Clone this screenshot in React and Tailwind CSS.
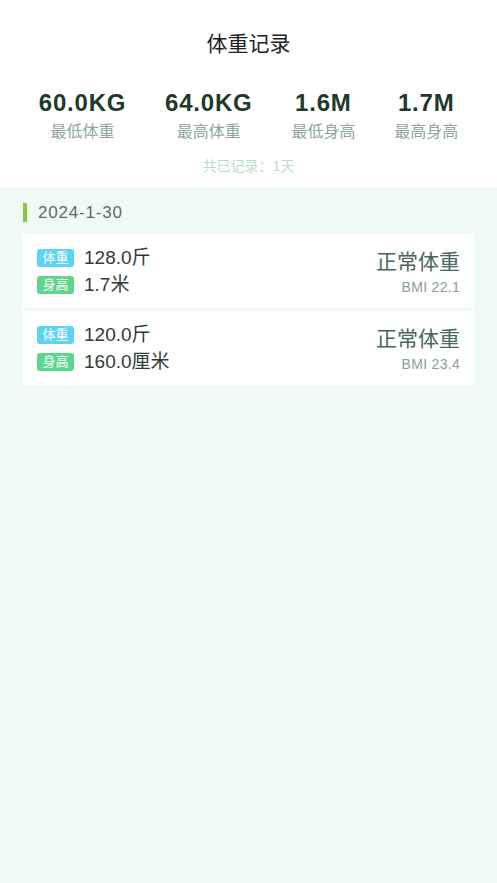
import React from "react";

const F = { fontFamily: '"Liberation Sans", "Noto Sans CJK SC", sans-serif' };

function Stat({ value, label }) {
  return (
    <div className="flex flex-col items-center">
      <div className="text-[24px] leading-[30px] font-bold tracking-[0.8px] text-[#1e3a2b]">{value}</div>
      <div className="text-[16px] leading-[22px] mt-[3px] text-[#8ea69c]">{label}</div>
    </div>
  );
}

function Badge({ text, color }) {
  return (
    <div className={`w-[37px] h-[18px] rounded-[3px] ${color} text-white text-[13px] leading-[18px] text-center`}>
      {text}
    </div>
  );
}

function Card({ w, h, bmi }) {
  return (
    <div className="bg-white mx-[23px] h-[74px] px-[14px] flex items-center justify-between">
      <div className="flex flex-col gap-[9px]">
        <div className="flex items-center gap-[10px]">
          <Badge text="体重" color="bg-[#5dd4f4]" />
          <span className="text-[19px] leading-[18px] text-[#2e3c37]">{w}</span>
        </div>
        <div className="flex items-center gap-[10px]">
          <Badge text="身高" color="bg-[#5fd68e]" />
          <span className="text-[19px] leading-[18px] text-[#2e3c37]">{h}</span>
        </div>
      </div>
      <div className="flex flex-col items-end mt-[3px]">
        <div className="text-[21px] leading-[26px] text-[#4a6660]">正常体重</div>
        <div className="text-[14px] leading-[18px] mt-[3px] tracking-[0.3px] text-[#86a099]">{bmi}</div>
      </div>
    </div>
  );
}

export default function App() {
  return (
    <div style={F} className="w-[497px] h-[883px] bg-[#f1f9f5] flex flex-col">
      <div className="bg-white h-[187px] flex flex-col items-center">
        <div className="mt-[31px] text-[21px] leading-[26px] text-[#222]">体重记录</div>
        <div className="w-full flex justify-evenly mt-[31px]">
          <Stat value="60.0KG" label="最低体重" />
          <Stat value="64.0KG" label="最高体重" />
          <Stat value="1.6M" label="最低身高" />
          <Stat value="1.7M" label="最高身高" />
        </div>
        <div className="mt-[13px] text-[14px] leading-[20px] text-[#b7dcc6]">共已记录：1天</div>
      </div>
      <div className="flex items-center mt-[16px] ml-[23px] h-[19px]">
        <div className="w-[4px] h-[19px] bg-[#8bc34a]" />
        <span className="ml-[11px] text-[17px] leading-[19px] text-[#5b6b66] tracking-[0.8px]">2024-1-30</span>
      </div>
      <div className="mt-[12px] flex flex-col gap-[3px]">
        <Card w="128.0斤" h="1.7米" bmi="BMI 22.1" />
        <Card w="120.0斤" h="160.0厘米" bmi="BMI 23.4" />
      </div>
    </div>
  );
}
